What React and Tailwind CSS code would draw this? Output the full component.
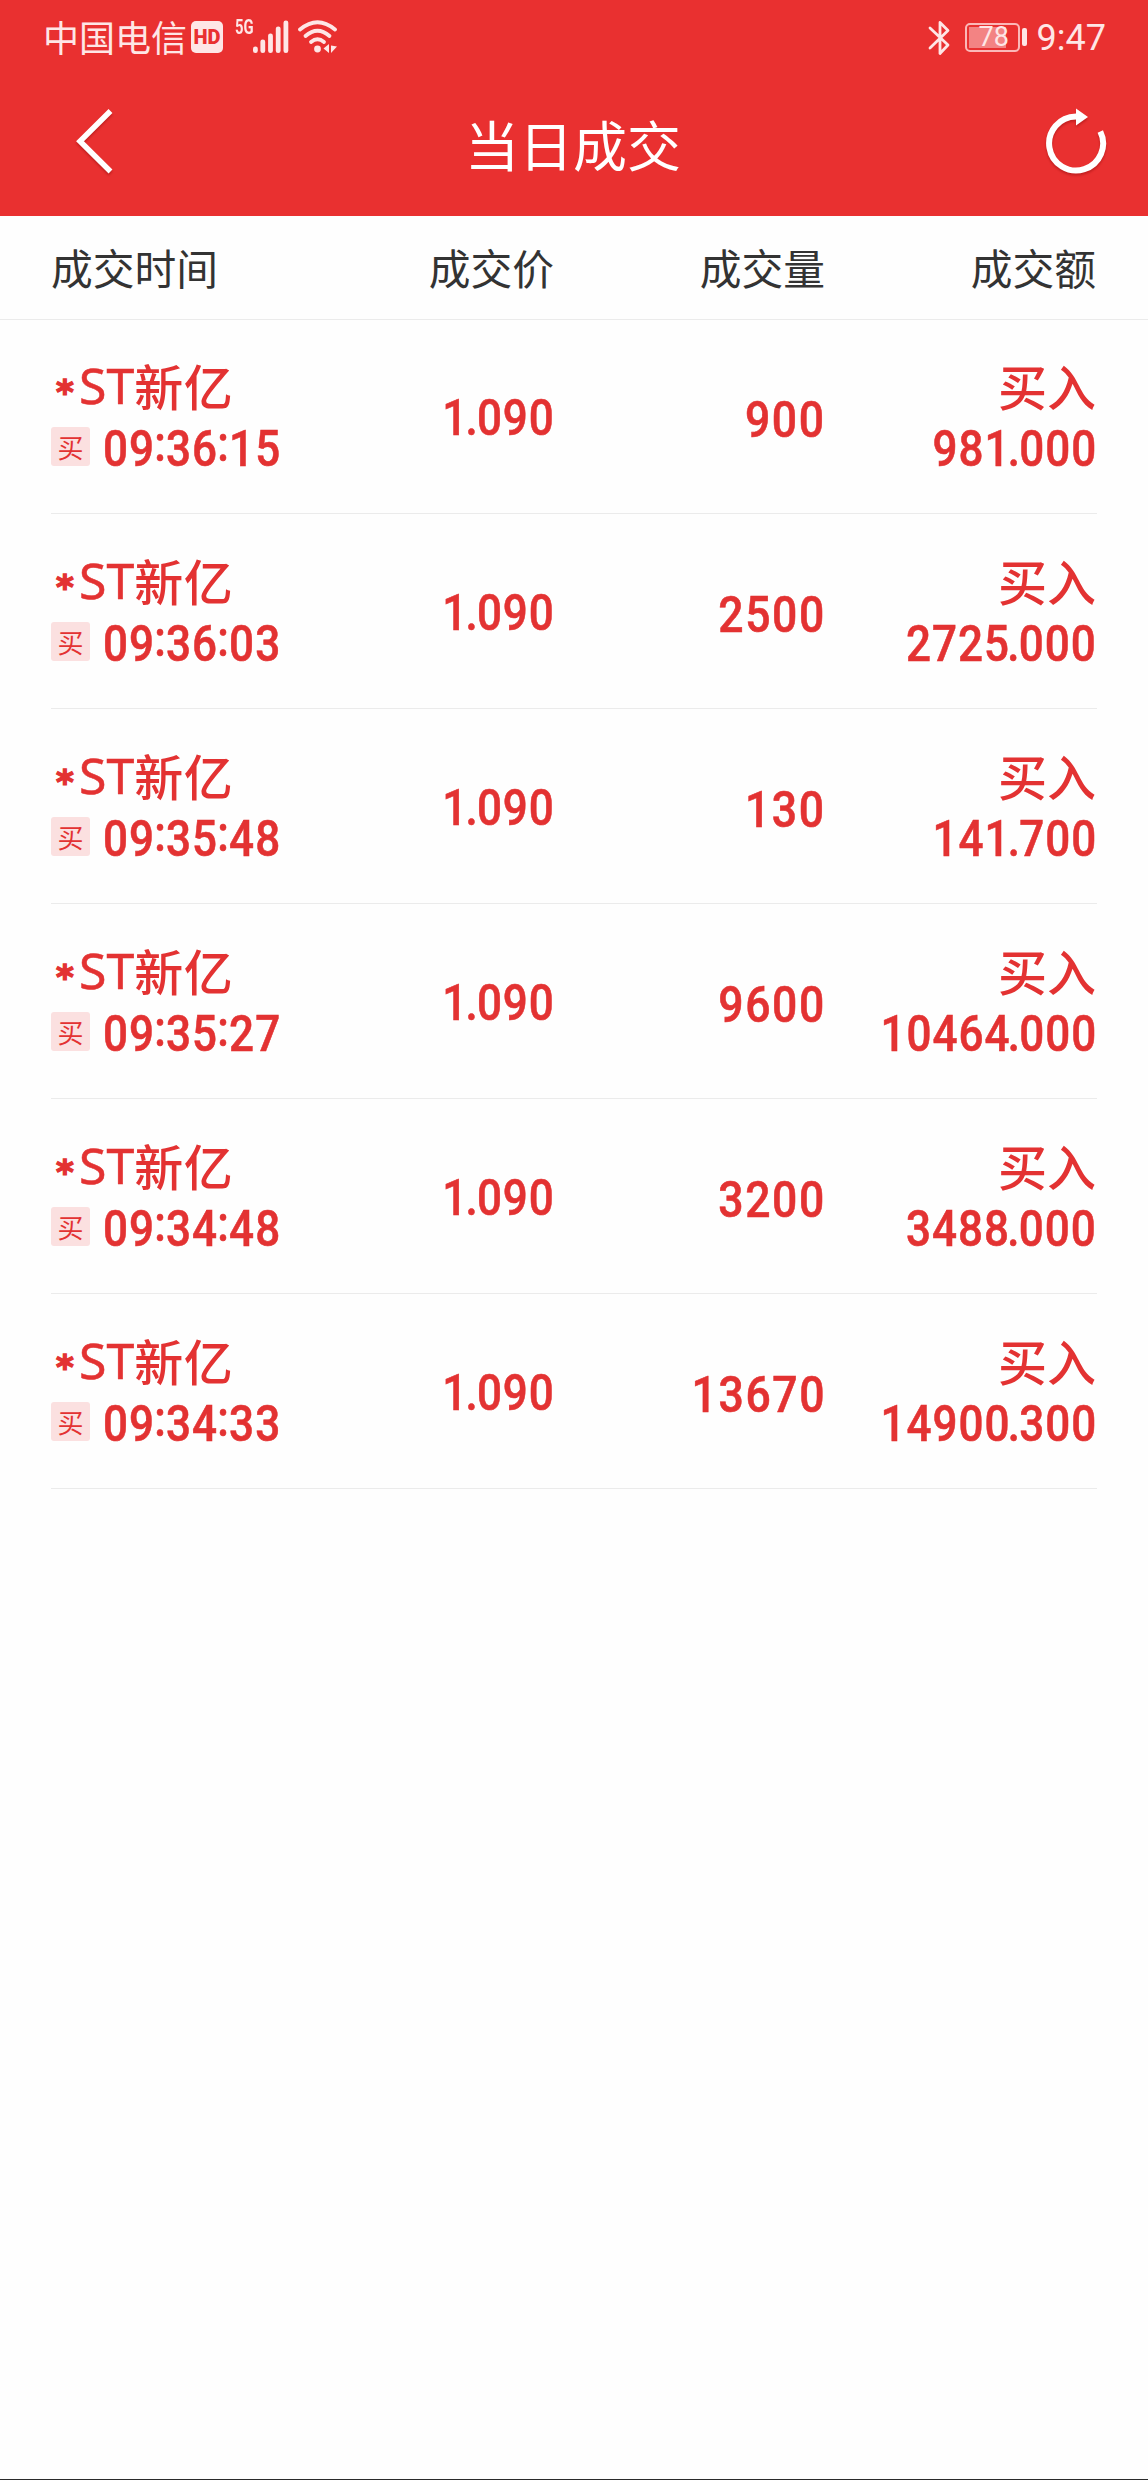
import React from "react";

const deals = [
  { time: "09:36:15", price: "1.090", volume: "900", amount: "981.000" },
  { time: "09:36:03", price: "1.090", volume: "2500", amount: "2725.000" },
  { time: "09:35:48", price: "1.090", volume: "130", amount: "141.700" },
  { time: "09:35:27", price: "1.090", volume: "9600", amount: "10464.000" },
  { time: "09:34:48", price: "1.090", volume: "3200", amount: "3488.000" },
  { time: "09:34:33", price: "1.090", volume: "13670", amount: "14900.300" },
];

const StatusBar = () => {
  return (
    <div className="h-[75px] pl-[43px] pr-[42px] flex items-center justify-between text-[#fee6e6]">
      <div className="flex items-center">
        <span className="-mt-[3px] text-[36px] leading-none">中国电信</span>
        <span className="ml-[4px] -mt-[2px] w-[32px] h-[32px] rounded-[5px] bg-[#fee6e6] text-[#e93030] font-['Roboto'] font-black text-[20px] leading-none flex items-center justify-center">
          HD
        </span>
        <span className="ml-[12px] w-[18px] mb-[22px] font-['Roboto'] font-bold text-[20px] leading-none">
          <span className="inline-block origin-left scale-x-[0.74]">5G</span>
        </span>
        <svg className="-mt-[2px] w-[36px] h-[34px]" viewBox="0 0 36 34" fill="currentColor">
          <rect x="0" y="26.5" width="4.8" height="6.5" rx="2.3" />
          <rect x="7.4" y="19.5" width="4.8" height="13.5" rx="2.3" />
          <rect x="15.1" y="13.5" width="4.8" height="19.5" rx="2.3" />
          <rect x="22.8" y="6.5" width="4.8" height="26.5" rx="2.3" />
          <rect x="30.5" y="0.5" width="4.8" height="32.5" rx="2.3" />
        </svg>
        <svg className="ml-[9px] -mt-[2px] w-[40px] h-[34px]" viewBox="0 0 40 34" fill="none">
          <g stroke="currentColor" strokeWidth="3.8" strokeLinecap="round">
            <path d="M2 9.5Q19.5 -5 37 9.5" />
            <path d="M7.5 16Q19.5 5.5 31.5 16" />
            <path d="M13 22Q19.5 16.5 26 22" />
          </g>
          <circle cx="19.5" cy="29" r="3.4" fill="currentColor" />
          <path d="M31 24v9l-5.500-4.500zM33 25.500l6 1-6 6.500z" fill="currentColor" />
        </svg>
      </div>
      <div className="flex items-center">
        <svg className="w-[22px] h-[36px]" viewBox="0 0 22 36" fill="none">
          <path
            d="M2 8l18 17-8 8.500V2.500l8 8L2 28"
            stroke="currentColor"
            strokeWidth="2.8"
            strokeLinejoin="round"
            strokeLinecap="round"
          />
        </svg>
        <div className="ml-[15px] w-[55px] h-[29px] -mt-[1px] rounded-[5px] border-2 border-[#fbb8b8] p-[2px] relative">
          <div className="w-[37px] h-[21px] bg-[#f38383]" />
          <span className="absolute left-[12px] top-[-1px] font-['Roboto'] text-[27px] leading-[27px]">
            78
          </span>
        </div>
        <div className="ml-[2px] -mt-[2px] w-[5px] h-[18px] rounded-[2px] bg-[#fee6e6]" />
        <span className="ml-[10px] mt-[1px] font-['Roboto'] text-[36px] leading-none">9:47</span>
      </div>
    </div>
  );
};

const TitleBar = () => {
  return (
    <div className="h-[141px] pl-[74px] pr-[40px] flex justify-between text-white">
      <svg className="mt-[33px] w-[60px] h-[68px] drop-shadow-[0_2px_1px_rgba(120,0,0,0.35)]" viewBox="0 0 60 68" fill="none">
        <path d="M36.500 3L6 33.300 36.500 63.500" stroke="currentColor" strokeWidth="5.5" />
      </svg>
      <h1 className="mt-[42px] -ml-[32px] text-[54px] leading-[54px]">当日成交</h1>
      <svg className="mt-[31px] w-[64px] h-[72px] drop-shadow-[0_2px_1px_rgba(120,0,0,0.35)]" viewBox="0 0 64 72" fill="none">
        <path d="M56.300 25.500A27 27 0 1 1 32 10.500" stroke="currentColor" strokeWidth="6" />
        <path d="M32 2.500l12 8.500-12 8.500z" fill="currentColor" />
      </svg>
    </div>
  );
};

// separators are tighter than the digits, and the colon sits in the middle of them
const Digits = ({ value }) => {
  return value.split(/([.:])/).map((part, i) => {
    if (part === ":")
      return (
        <span key={i} className="-mx-[1px] align-[5px] leading-none">
          :
        </span>
      );
    if (part === ".")
      return (
        <span key={i} className="-ml-[3px] -mr-[2px]">
          .
        </span>
      );
    return <span key={i}>{part}</span>;
  });
};

const DealRow = ({ deal }) => {
  return (
    <div className="h-[195px] grid grid-cols-[233px_271px_271px_271px] border-b border-[#ebebeb] text-[#e33232]">
      <div className="pt-[40px]">
        <div className="h-[52px] flex items-center whitespace-nowrap">
          <span className="w-[28px] pl-[5px] pt-[14px] font-['DejaVu_Sans'] font-bold text-[34px] leading-none [-webkit-text-stroke:1.4px_#e33232]">
            *
          </span>
          <span className="font-['Noto_Sans'] text-[50px] leading-[52px] [-webkit-text-stroke:0.5px_#e33232]">
            ST
          </span>
          <span className="font-medium text-[49px] leading-[52px] tracking-[0.5px]">新亿</span>
        </div>
        <div className="mt-[10px] h-[50px] flex items-center">
          <span className="mt-[1px] w-[39px] h-[39px] shrink-0 rounded-[3px] bg-[#fbe0e0] text-[26px] leading-none flex items-center justify-center">
            买
          </span>
          <span className="ml-[13px] inline-block origin-left scale-x-[0.88] font-['Roboto'] font-medium text-[50px] leading-[50px] tracking-[1.2px] whitespace-nowrap [-webkit-text-stroke:0.6px_#e33232]">
            <Digits value={deal.time} />
          </span>
        </div>
      </div>
      <div className="pt-[74px] text-right font-['Roboto'] font-medium text-[50px] leading-[50px] tracking-[1px] [-webkit-text-stroke:0.6px_#e33232]">
        <span className="inline-block origin-right scale-x-[0.88]">
          <Digits value={deal.price} />
        </span>
      </div>
      <div className="pt-[76px] text-right font-['Roboto'] font-medium text-[50px] leading-[50px] tracking-[1.8px] [-webkit-text-stroke:0.6px_#e33232]">
        <span className="inline-block origin-right scale-x-[0.89]">{deal.volume}</span>
      </div>
      <div className="pt-[40px] flex flex-col items-end">
        <span className="pr-[1px] font-medium text-[49px] leading-[52px]">买入</span>
        <span className="mt-[13px] inline-block origin-right scale-x-[0.88] font-['Roboto'] font-medium text-[50px] leading-[50px] tracking-[1.1px] [-webkit-text-stroke:0.6px_#e33232]">
          <Digits value={deal.amount} />
        </span>
      </div>
    </div>
  );
};

const App = () => {
  return (
    <div className="w-[1148px] h-[2480px] flex flex-col bg-[#fefefe] border-b border-[#2b2b2b] font-['Noto_Sans_CJK_SC',sans-serif]">
      <header className="h-[216px] bg-[#e93030]">
        <StatusBar />
        <TitleBar />
      </header>

      <div className="h-[104px] pl-[51px] grid grid-cols-[233px_270px_271px_271px] items-center border-b border-[#ebebeb] text-[#333] text-[41.75px] leading-none">
        <span>成交时间</span>
        <span className="text-right">成交价</span>
        <span className="text-right">成交量</span>
        <span className="text-right">成交额</span>
      </div>

      <div className="mt-[-1px] px-[51px]">
        {deals.map((deal) => (
          <DealRow key={deal.time} deal={deal} />
        ))}
      </div>
    </div>
  );
};

export default App;
